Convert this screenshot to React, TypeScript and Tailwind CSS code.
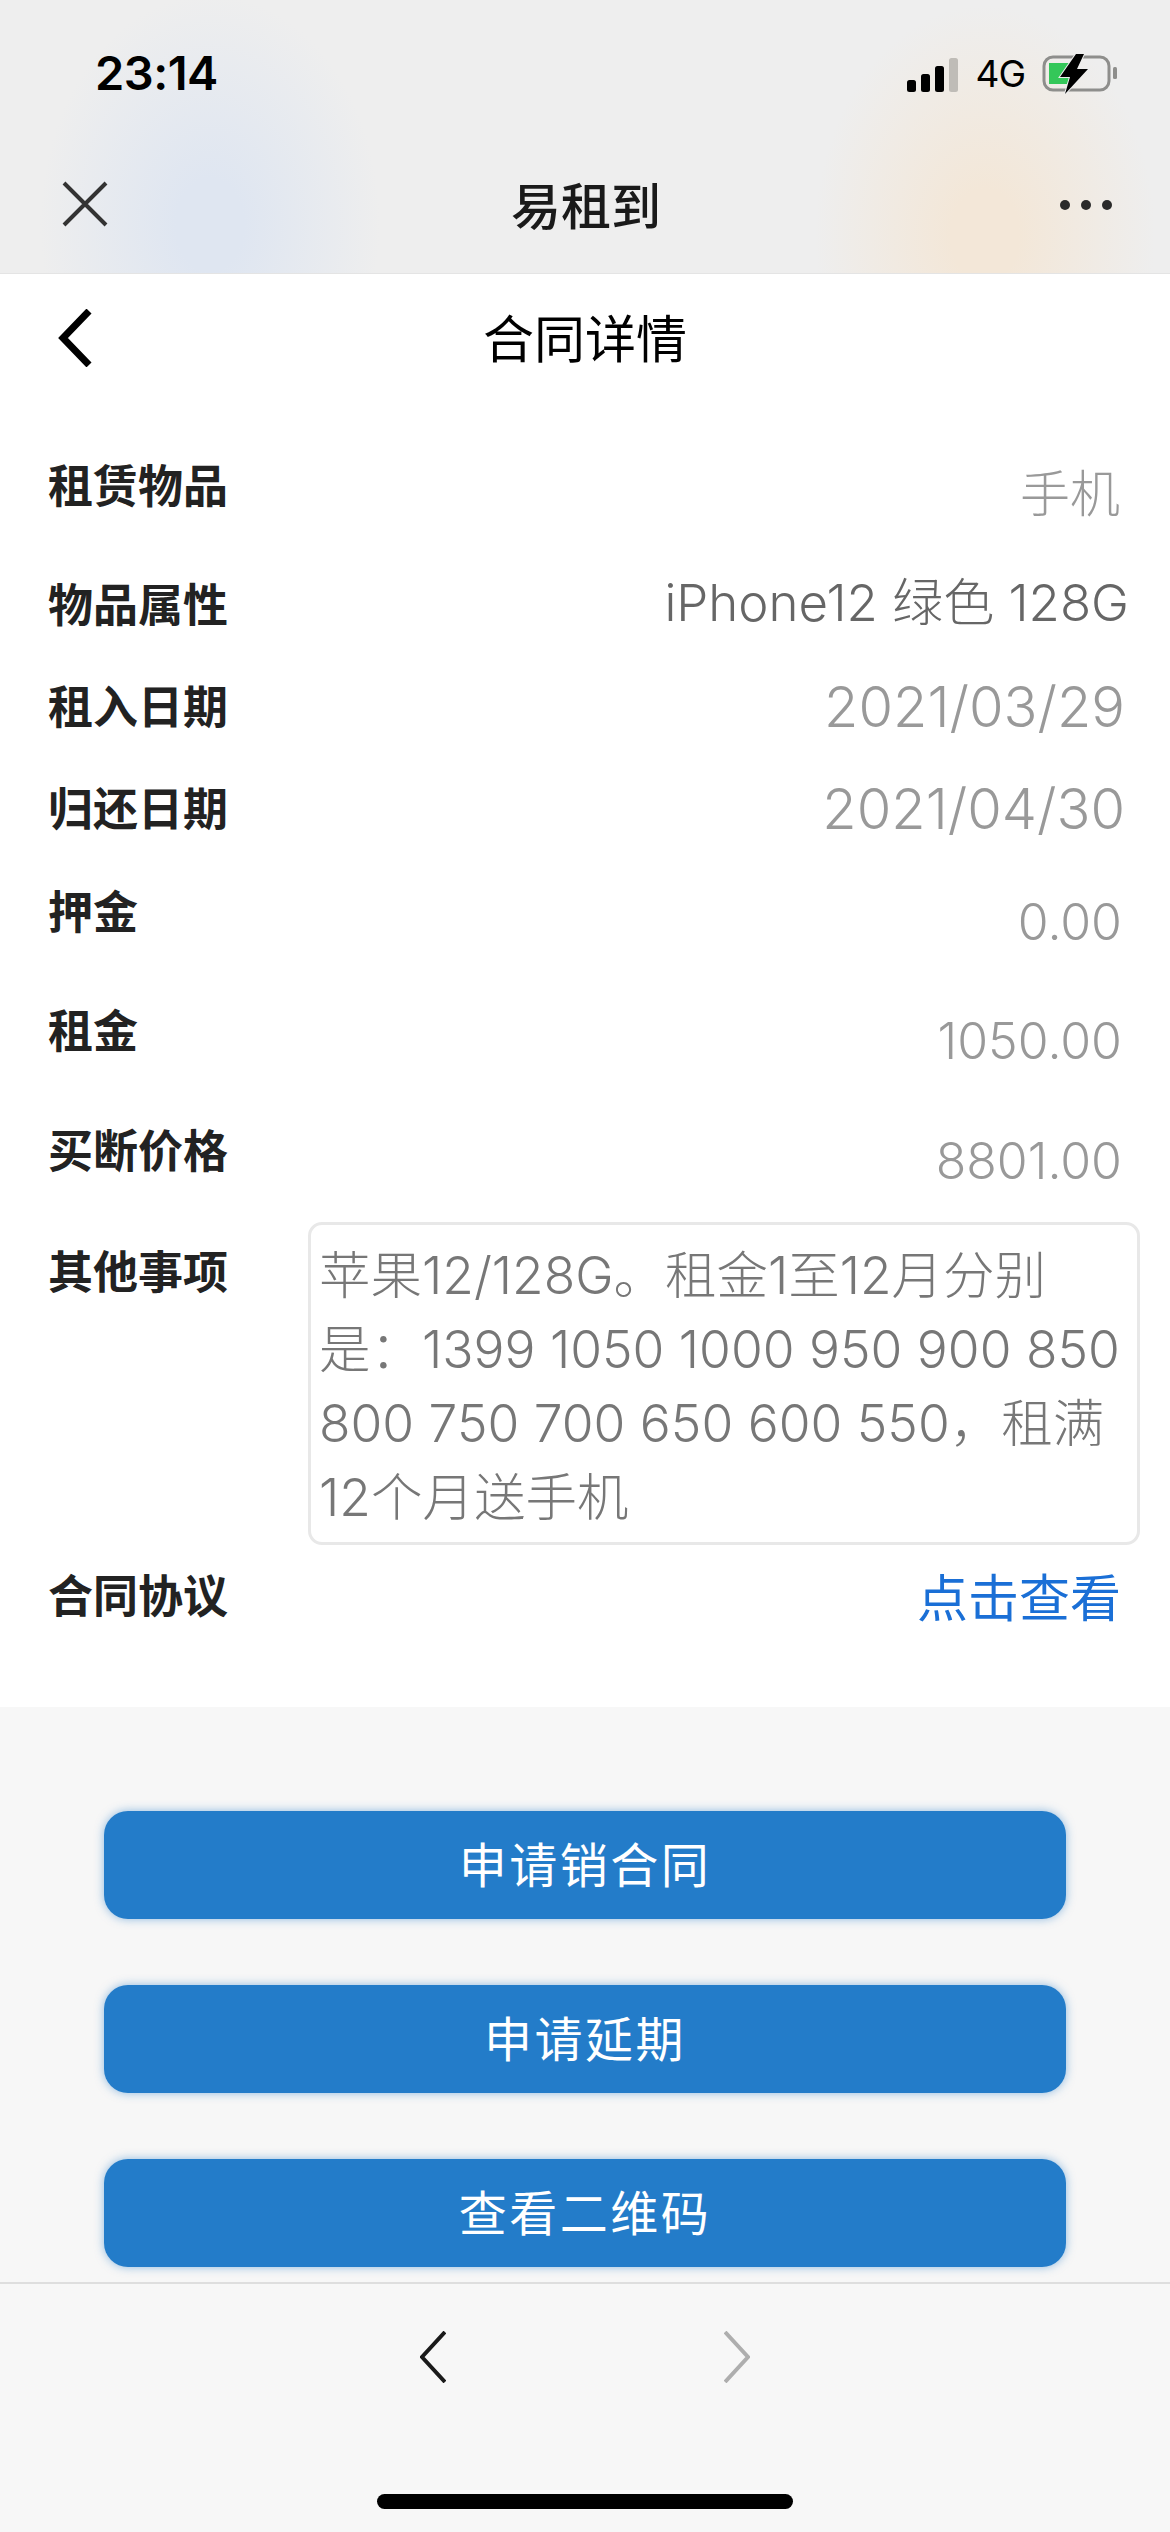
const latin = "font-['Inter','Noto_Sans_CJK_SC',sans-serif]";
const cjk = "font-['Noto_Sans_CJK_SC',sans-serif]";

const rows = [
  { label: '租赁物品', value: '手机', row: 'h-[119px]', val: 'mt-[8px] text-[50px] text-[#999999]' },
  { label: '物品属性', value: 'iPhone12 绿色 128G', row: 'h-[102px]', val: 'mt-[-2px] mr-[-9px] text-[51px] text-[#666666]' },
  { label: '租入日期', value: '2021/03/29', row: 'h-[102px]', val: 'mr-[-5px] text-[56px] text-[#999999]' },
  { label: '归还日期', value: '2021/04/30', row: 'h-[103px]', val: 'mr-[-5px] text-[56px] text-[#999999]' },
  { label: '押金', value: '0.00', row: 'h-[119px]', val: 'mt-[10px] mr-[-2px] text-[50px] text-[#999999]' },
  { label: '租金', value: '1050.00', row: 'h-[120px]', val: 'mt-[10px] mr-[-2px] text-[50px] text-[#999999]' },
  { label: '买断价格', value: '8801.00', row: 'h-[101px]', val: 'mt-[10px] mr-[-2px] text-[50px] text-[#999999]' },
];

const noteLines = [
  '苹果12/128G。租金1至12月分别',
  '是：1399 1050 1000 950 900 850',
  '800 750 700 650 600 550，租满',
  '12个月送手机',
];

const actions = ['申请销合同', '申请延期', '查看二维码'];

function StatusIcons() {
  return (
    <div className="flex items-center mt-[6px] mr-[-3px]">
      <svg width="52" height="36" viewBox="0 0 52 36" className="mt-[3px]">
        <rect x="0" y="22" width="9" height="12" rx="2.5" fill="#000" />
        <rect x="14" y="16" width="9" height="18" rx="2.5" fill="#000" />
        <rect x="28" y="8" width="9" height="26" rx="2.5" fill="#000" />
        <rect x="42" y="0" width="9" height="34" rx="2.5" fill="#bfbcb7" />
      </svg>
      <span className="ml-[16px] text-[37px] leading-[40px] text-black font-['Inter',sans-serif] tracking-[-1px]">4G</span>
      <svg width="76" height="40" viewBox="0 0 76 40" className="ml-[17px]">
        <rect x="2" y="3" width="65" height="33" rx="9" fill="none" stroke="#8e8e8c" strokeWidth="3" />
        <path d="M7 9h25l-10 13h8l-5 8H7z" fill="#34c759" />
        <rect x="71" y="13" width="4" height="12" rx="1.5" fill="#8e8e8c" />
        <path d="M34 0 L18 23 H28 L23 40 L46 15 H35 L42 0 Z" fill="#000" stroke="#eeeeee" strokeWidth="2" paintOrder="stroke" />
      </svg>
    </div>
  );
}

export default function App() {
  return (
    <div className={`w-[1170px] h-[2532px] overflow-hidden flex flex-col bg-[#f7f7f7] ${cjk}`}>
      {/* WeChat style top bar */}
      <div className="h-[274px] shrink-0 border-b border-[#e4e4e4] bg-[#eeeeee] bg-[radial-gradient(ellipse_170px_230px_at_210px_225px,#dfe6f1_20%,#eeeeee00_100%),radial-gradient(ellipse_170px_230px_at_985px_235px,#f3e7d8_20%,#eeeeee00_100%)]">
        <div className="h-[148px] pt-[48px] pl-[95px] pr-[55px] flex justify-between items-start">
          <span className="text-[47px] leading-[50px] font-semibold text-black font-['Inter',sans-serif] tracking-[-0.5px]">23:14</span>
          <StatusIcons />
        </div>
        <div className="h-[125px] pl-[62px] pr-[58px] grid grid-cols-[1fr_auto_1fr] items-center pb-[14px]">
          <svg width="46" height="46" viewBox="0 0 46 46">
            <path d="M2 2 L44 44 M44 2 L2 44" stroke="#333" strokeWidth="4" fill="none" />
          </svg>
          <span className="text-[50px] leading-[60px] font-medium text-[#1a1a1a] mt-[-1px] mr-[2px]">易租到</span>
          <div className="flex justify-end gap-[11px] mt-[3px]">
            <span className="w-[10px] h-[10px] rounded-full bg-[#2a2a2a]" />
            <span className="w-[10px] h-[10px] rounded-full bg-[#2a2a2a]" />
            <span className="w-[10px] h-[10px] rounded-full bg-[#2a2a2a]" />
          </div>
        </div>
      </div>

      {/* Contract details */}
      <div className="h-[1433px] shrink-0 bg-white">
        <div className="h-[129px] px-[58px] grid grid-cols-[1fr_auto_1fr] items-center">
          <svg width="35" height="58" viewBox="0 0 35 58" className="mt-[-2px]">
            <path d="M31 2 L5 29 L31 56" stroke="#000" strokeWidth="7" fill="none" />
          </svg>
          <span className="text-[51px] leading-[60px] text-black mb-[5px]">合同详情</span>
          <span />
        </div>
        <div className="mt-[53px] pl-[48px] pr-[50px]">
          {rows.map((r) => (
            <div key={r.label} className={`flex justify-between items-start ${r.row}`}>
              <span className="text-[45px] leading-[60px] font-semibold text-[#222222] mt-[-2px]">{r.label}</span>
              <span className={`leading-[60px] font-light ${latin} ${r.val}`}>{r.value}</span>
            </div>
          ))}
          <div className="flex items-start">
            <span className="mt-[18px] w-[260px] shrink-0 text-[45px] leading-[60px] font-semibold text-[#222222]">其他事项</span>
            <div className={`w-[832px] h-[323px] shrink-0 rounded-[14px] border-[3px] border-[#e8e8e8] pl-[8px] pt-[13px] mr-[-30px] text-[51.5px] leading-[74px] font-light text-[#777777] ${latin}`}>
              {noteLines.map((line) => (
                <div key={line} className="whitespace-nowrap">{line}</div>
              ))}
            </div>
          </div>
          <div className="mt-[19px] flex justify-between items-start">
            <span className="text-[45px] leading-[60px] font-semibold text-[#222222]">合同协议</span>
            <span className="text-[51px] leading-[60px] text-[#1a6fd6] mr-[-1px] mt-[1px]">点击查看</span>
          </div>
        </div>
      </div>

      {/* Actions */}
      <div className="h-[575px] shrink-0 pt-[104px] px-[104px] flex flex-col gap-[66px]">
        {actions.map((a) => (
          <button
            key={a}
            className="h-[108px] shrink-0 rounded-[24px] bg-[#237cc9] shadow-[0_0_10px_#237cc980] text-white text-[48px] leading-[60px] tracking-[2.5px] pb-[6px]"
          >
            {a}
          </button>
        ))}
      </div>

      {/* Browser nav */}
      <div className="flex-1 border-t-[2px] border-[#dedede] bg-[#f7f7f7] relative z-10 flex flex-col items-center">
        <div className="mt-[47px] flex gap-[278px]">
          <svg width="26" height="52" viewBox="0 0 26 52">
            <path d="M25 1 L2 26 L25 51" stroke="#1a1a1a" strokeWidth="4" fill="none" />
          </svg>
          <svg width="26" height="52" viewBox="0 0 26 52">
            <path d="M1 1 L24 26 L1 51" stroke="#aeaeae" strokeWidth="4" fill="none" />
          </svg>
        </div>
        <div className="mt-[111px] w-[416px] h-[15px] rounded-full bg-black" />
      </div>
    </div>
  );
}
